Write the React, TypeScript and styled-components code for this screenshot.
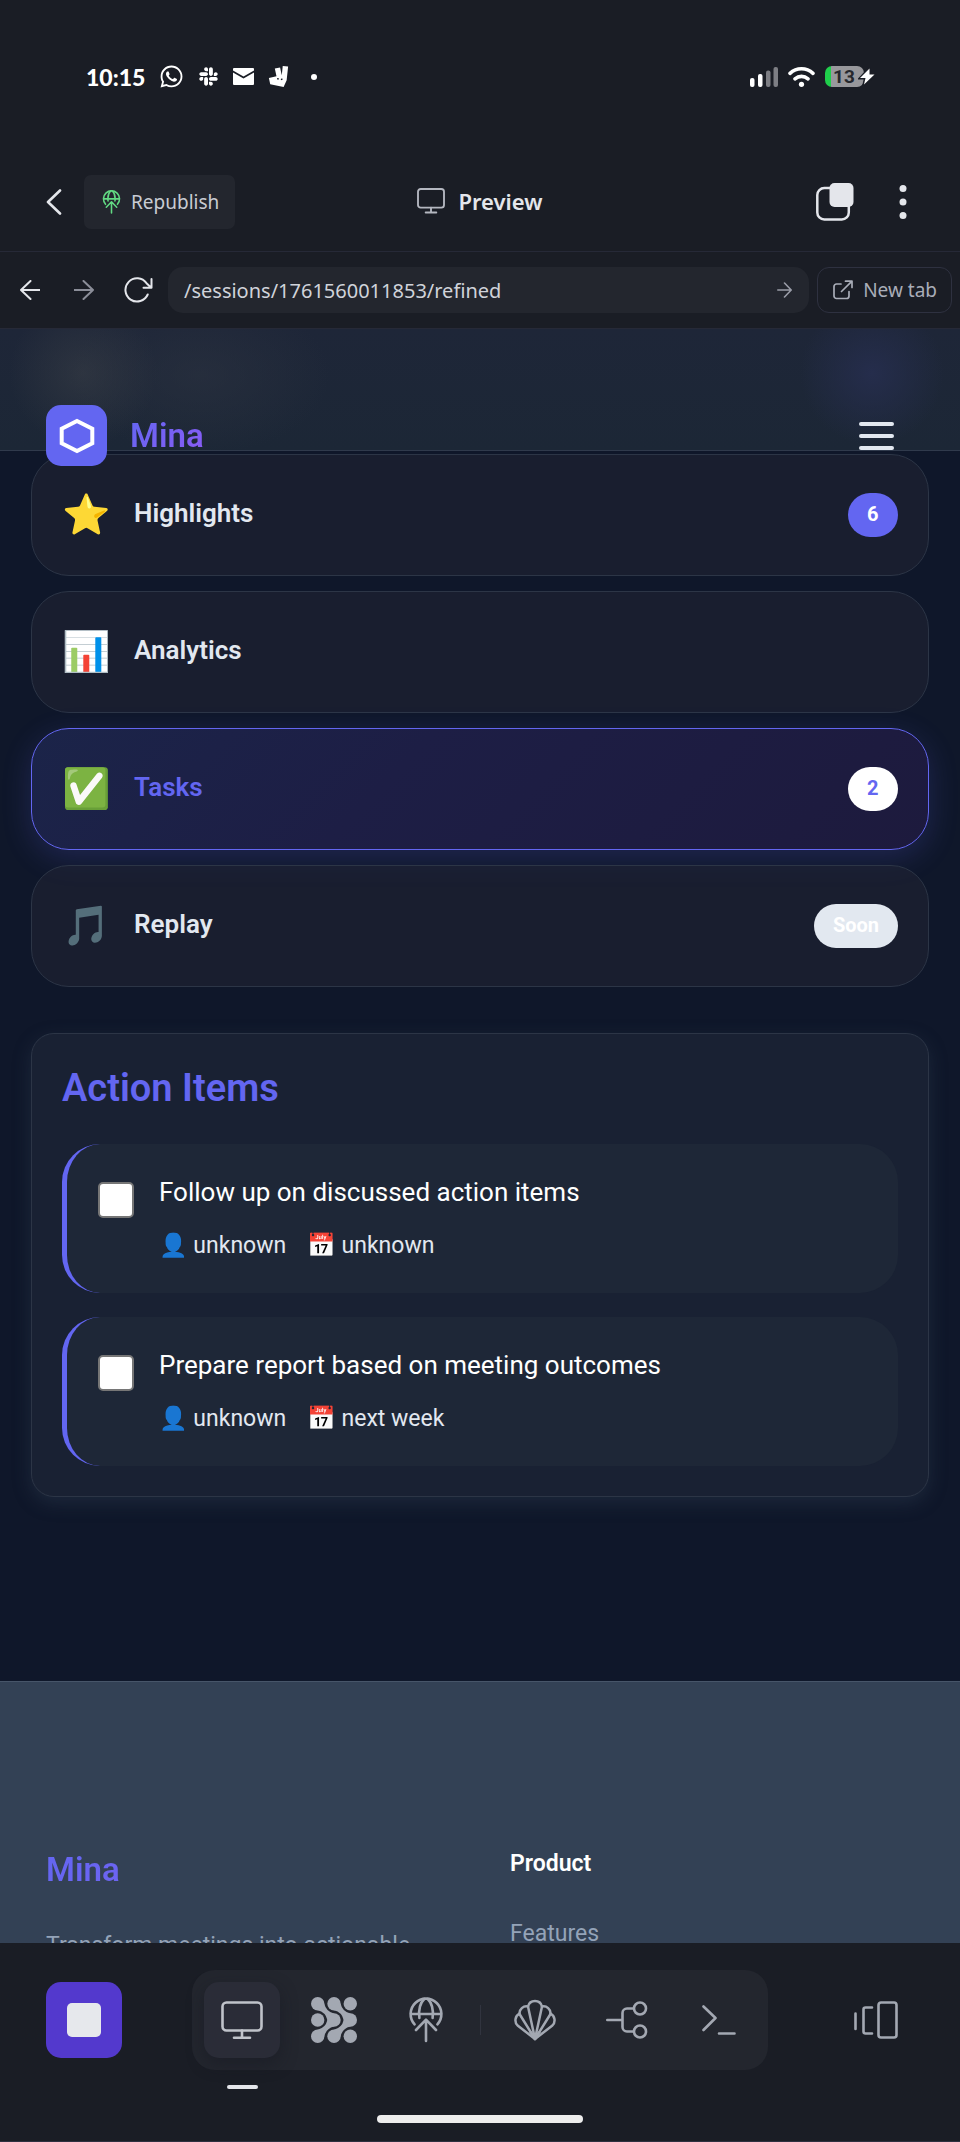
import React from "react";
import styled, { createGlobalStyle, css } from "styled-components";
import { FaWhatsapp, FaSlack } from "react-icons/fa";
import { SiDeliveroo } from "react-icons/si";

const GlobalStyle = createGlobalStyle`
  * { box-sizing: border-box; }
  body { margin: 0; background: #1a1d25; }
  button, input { font: inherit; color: inherit; margin: 0; }
  button { border: 0; padding: 0; background: none; cursor: pointer; }
  h1, h2, h3, p, ul { margin: 0; padding: 0; }
  a { color: inherit; text-decoration: none; }
  svg { display: block; flex: none; }
`;

const Shell = styled.div`
  height: 100vh;
  display: flex;
  flex-direction: column;
  overflow: hidden;
  background: #1a1d25;
  color: #e4e6eb;
  font-family: "Noto Sans", sans-serif;
  font-size: 19px;
`;

/* Device status */
const StatusBar = styled.div`
  flex: none;
  height: 153px;
  padding: 0 96px 0 86px;
  display: flex;
  align-items: center;
  justify-content: space-between;
  color: #fff;
`;
const StatusGroup = styled.div<{ $gap: number }>`
  display: flex;
  align-items: center;
  gap: ${(p) => p.$gap}px;
`;
const Clock = styled.time`
  font: 900 23px/28px Lato, sans-serif;
`;
const Dot = styled.span`
  width: 6px;
  height: 6px;
  margin-left: 8px;
  border-radius: 3px;
  background: #fff;
`;
const Battery = styled.div`
  position: relative;
  width: 39px;
  height: 21px;
  padding-right: 1px;
  border-radius: 7px;
  background: linear-gradient(90deg, #1fcf4b 6px, #98989c 6px);
  color: #26282e;
  font: 700 19px/21px Roboto, sans-serif;
  text-align: center;
`;
const Bolt = styled.svg`
  position: absolute;
  left: 33px;
  top: 1px;
`;

/* Workspace title bar */
const TitleBar = styled.header`
  flex: none;
  height: 99px;
  padding: 0 46px;
  display: grid;
  grid-template-columns: 1fr auto 1fr;
  align-items: center;
  border-bottom: 1px solid #262937;
`;
const TitleSide = styled.div<{ $end?: boolean }>`
  display: flex;
  align-items: center;
  gap: ${(p) => (p.$end ? 45 : 22)}px;
  padding-right: ${(p) => (p.$end ? 7 : 0)}px;
  justify-content: ${(p) => (p.$end ? "flex-end" : "flex-start")};
`;
const RepublishButton = styled.button`
  height: 54px;
  padding: 0 16px 0 18px;
  display: flex;
  align-items: center;
  gap: 10px;
  border-radius: 7px;
  background: #23262e;
  color: #c9ccd3;
`;
const PageTitle = styled.h1`
  display: flex;
  align-items: center;
  gap: 13px;
  padding-bottom: 2px;
  font-size: 22px;
  line-height: 30px;
  font-weight: 600;
  svg { color: #b4b7c0; }
`;

/* Address row */
const AddressRow = styled.div`
  flex: none;
  height: 77px;
  padding: 0 8px 0 3px;
  display: flex;
  align-items: center;
  border-bottom: 1px solid #262937;
`;
const NavButton = styled.button<{ $dim?: boolean }>`
  width: 54px;
  height: 46px;
  display: grid;
  place-items: center;
  color: ${(p) => (p.$dim ? "#8b8e99" : "#e4e6eb")};
`;
const AddressField = styled.form`
  flex: 1;
  min-width: 0;
  height: 46px;
  margin: 0 8px 0 3px;
  padding: 0 17px 0 16px;
  display: flex;
  align-items: center;
  border-radius: 15px;
  background: #23262e;
  color: #d0d3da;
  font-size: 20px;
`;
const AddressInput = styled.input`
  flex: 1;
  min-width: 0;
  border: 0;
  padding: 0;
  background: none;
  outline: none;
`;
const GoButton = styled.button`
  color: #9a9da8;
`;
const NewTabButton = styled.button`
  height: 46px;
  padding: 0 14px 0 15px;
  display: flex;
  align-items: center;
  gap: 10px;
  border: 1px solid #2e3140;
  border-radius: 12px;
  color: #a9adb8;
`;

/* Previewed site */
const Site = styled.div`
  flex: 1;
  min-height: 0;
  overflow: hidden;
  background: #0f172a;
  color: #e2e8f0;
  font-family: Roboto, "Noto Color Emoji", sans-serif;
`;
const SiteHeader = styled.header`
  position: relative;
  z-index: 1;
  height: 122px;
  padding: 76px 66px 0 46px;
  display: flex;
  align-items: flex-start;
  justify-content: space-between;
  border-bottom: 1px solid #303a4c;
  background:
    radial-gradient(circle at 83px 44px, rgba(58, 63, 71, 0.55), transparent 74px),
    radial-gradient(ellipse 130px 80px at 200px 46px, rgba(43, 50, 64, 0.6), transparent),
    radial-gradient(circle at calc(100% - 88px) 44px, #252d4c, rgba(37, 45, 76, 0) 72px),
    linear-gradient(#1e2638, #1c2736);
`;
const Brand = styled.a`
  display: flex;
  align-items: center;
  gap: 23px;
`;
const BrandMark = styled.span`
  width: 61px;
  height: 61px;
  display: grid;
  place-items: center;
  border-radius: 15px;
  background: #6366f1;
`;
const Wordmark = styled.span`
  font-size: 33px;
  line-height: 44px;
  font-weight: 600;
  color: transparent;
  background: linear-gradient(135deg, #6366f1, #8b5cf6);
  background-clip: text;
`;
const MenuButton = styled.button`
  height: 61px;
  display: flex;
  flex-direction: column;
  justify-content: center;
  gap: 8px;
`;
const MenuLine = styled.span`
  width: 35px;
  height: 4px;
  border-radius: 2px;
  background: #e2e8f0;
`;
const Content = styled.main`
  padding: 3px 31px 184px;
`;
const TabList = styled.nav`
  display: flex;
  flex-direction: column;
  gap: 15px;
`;
const TabCard = styled.button<{ $active?: boolean }>`
  height: 122px;
  padding: 0 30px;
  display: flex;
  align-items: center;
  border: 1px solid ${(p) => (p.$active ? "#6366f1" : "#2c3546")};
  border-radius: 38px;
  background: rgba(32, 35, 52, 0.6);
  text-align: left;
  ${(p) =>
    p.$active &&
    css`
      color: #6366f1;
      background: linear-gradient(135deg, #1b2449, #1d1e45 40%, #1d1a3d);
      box-shadow: 0 8px 30px rgba(99, 102, 241, 0.2);
    `}
`;
const TabIcon = styled.span`
  width: 72px;
  font-size: 39px;
  line-height: 44px;
`;
const TabLabel = styled.span`
  flex: 1;
  padding-bottom: 4px;
  font-size: 26px;
  line-height: 36px;
  font-weight: 600;
`;
const badgeTones = {
  accent: css`background: #6366f1; color: #fff;`,
  light: css`background: #fff; color: #6366f1;`,
  muted: css`background: #e2e8f0; color: #fff;`,
};
const Badge = styled.span<{ $tone: keyof typeof badgeTones }>`
  height: 44px;
  min-width: 50px;
  padding: 0 19px 2px;
  border-radius: 22px;
  font-size: 20px;
  line-height: 42px;
  font-weight: 700;
  ${(p) => badgeTones[p.$tone]}
`;
const Panel = styled.section`
  margin-top: 46px;
  padding: 31px 30px 30px;
  border: 1px solid #2c3546;
  border-radius: 23px;
  background: #192133;
  box-shadow: 0 6px 18px rgba(51, 65, 85, 0.4);
`;
const PanelTitle = styled.h2`
  margin-bottom: 33px;
  font-size: 38px;
  line-height: 46px;
  font-weight: 600;
  color: #6366f1;
`;
const TaskList = styled.ul`
  display: flex;
  flex-direction: column;
  gap: 24px;
  list-style: none;
`;
const TaskItem = styled.li`
  padding: 30px 31px;
  display: flex;
  gap: 25px;
  border-left: 5px solid #6366f1;
  border-radius: 38px;
  background: #1e2737;
`;
const TaskCheck = styled.input`
  appearance: none;
  flex: none;
  width: 36px;
  height: 36px;
  margin-top: 8px;
  border: 2px solid #767676;
  border-radius: 5px;
  background: #fff;
  &:checked { background: #6366f1; }
`;
const TaskText = styled.label`
  display: block;
  margin-bottom: 18px;
  font-size: 26px;
  line-height: 36px;
  color: #fff;
`;
const TaskMeta = styled.div`
  display: flex;
  gap: 21px;
  font-size: 23px;
  line-height: 35px;
`;
const SiteFooter = styled.footer`
  padding: 166px 46px 60px;
  display: grid;
  grid-template-columns: 1fr 1fr;
  gap: 60px;
  border-top: 1px solid #475569;
  background: #334155;
  font-size: 23px;
  line-height: 32px;
  color: #94a3b8;
`;
const FooterHeading = styled.h3`
  margin-bottom: 38px;
  font-size: 23px;
  line-height: 32px;
  font-weight: 600;
  color: #fff;
`;
const FooterBrand = styled(Wordmark)`
  display: block;
  margin-bottom: 38px;
`;

/* Bottom dock */
const Dock = styled.footer`
  position: relative;
  flex: none;
  height: 199px;
  padding: 27px 46px 0;
  display: flex;
  align-items: flex-start;
  justify-content: space-between;
  border-bottom: 1px solid #2e3140;
  background: #1a1d25;
  color: #a3a8b2;
`;
const DockGroup = styled.div`
  height: 100px;
  padding: 0 11px 0 12px;
  display: flex;
  align-items: center;
  gap: 16px;
  border-radius: 23px;
  background: #23262e;
`;
const DockButton = styled.button<{ $active?: boolean }>`
  position: relative;
  width: 76px;
  height: 76px;
  display: grid;
  place-items: center;
  border-radius: 15px;
  ${(p) =>
    p.$active &&
    css`
      background: #2a2c37;
      color: #c0c3ca;
      box-shadow: 0 6px 16px rgba(22, 24, 34, 0.5);
      &::after {
        content: "";
        position: absolute;
        left: 23px;
        top: 103px;
        width: 31px;
        height: 4px;
        border-radius: 2px;
        background: #e4e6eb;
      }
    `}
`;
const DockSide = styled.div`
  height: 100px;
  display: flex;
  align-items: center;
`;
const StopButton = styled(DockButton)`
  background: #5339cd;
`;
const StopSquare = styled.span`
  width: 34px;
  height: 34px;
  border-radius: 5px;
  background: #e6e8ec;
`;
const DockDivider = styled.span`
  width: 1px;
  height: 30px;
  background: #31343f;
`;
const HomeIndicator = styled.span`
  position: absolute;
  left: 50%;
  bottom: 18px;
  width: 206px;
  height: 8px;
  margin-left: -103px;
  border-radius: 4px;
  background: #ededed;
`;

/* Icons */
type IconProps = { w: number; h: number; box: string; sw?: number; children: React.ReactNode };
const Line = ({ w, h, box, sw = 2, children }: IconProps) => (
  <svg width={w} height={h} viewBox={box} fill="none" stroke="currentColor" strokeWidth={sw} strokeLinecap="round" strokeLinejoin="round" aria-hidden="true">
    {children}
  </svg>
);
const MonitorIcon = ({ w, h, sw }: { w: number; h: number; sw: number }) => (
  <Line w={w} h={h} box="0 0 42 39" sw={sw}>
    <rect x="1.5" y="1.5" width="39" height="28" rx="4" />
    <path d="M21 29.5V36.5M13 36.8H29" />
  </Line>
);
const PublishIcon = ({ w, h, color, sw }: { w: number; h: number; color?: string; sw: number }) => (
  <svg width={w} height={h} viewBox="0 0 34 46" fill="none" stroke={color ?? "currentColor"} strokeWidth={sw} strokeLinecap="round" strokeLinejoin="round" aria-hidden="true">
    <path d="M5.6 27.4A15.4 15.4 0 1 1 28.4 27.4M1.6 17H32.4" />
    <path d="M10.4 21C9.4 13.5 11.2 6 15.2 2M23.6 21C24.6 13.5 22.8 6 18.8 2" />
    <path d="M17 44V23M7 33L17 22.6L27 33" />
  </svg>
);
const neck = "M13.3 6.7A13 13 0 0 0 23 16.4V23H16.4A13 13 0 0 0 6.7 13.3V6.7Z";
const AgentIcon = () => (
  <svg width="46" height="46" viewBox="0 0 46 46" fill="currentColor" aria-hidden="true">
    {[6.7, 23, 39.3].map((y) => [6.7, 23, 39.3].map((x) => <circle key={`${x}-${y}`} cx={x} cy={y} r="6.7" />))}
    <path d={neck} />
    <path d={neck} transform="translate(16.3 0)" />
    <path d={neck} transform="matrix(1 0 0 -1 0 46)" />
    <path d={neck} transform="matrix(1 0 0 -1 16.3 46)" />
  </svg>
);
const ShellIcon = () => (
  <Line w={42} h={42} box="0 0 42 42" sw={2.5}>
    <path d="M21 40L14 7.5A7.2 7.2 0 0 1 28 7.5L21 40" />
    <path d="M21 40L5.5 15A7 7 0 0 1 14 7.5M21 40L36.5 15A7 7 0 0 0 28 7.5" />
    <path d="M21 40L3.6 26.5A7.5 7.5 0 0 1 5.5 14.6M21 40L38.4 26.5A7.5 7.5 0 0 0 36.5 14.6" />
    <path d="M16.5 33L21 38L25.5 33" />
  </Line>
);

const tabs: { icon: string; label: string; badge?: string; tone?: keyof typeof badgeTones; active?: boolean }[] = [
  { icon: "⭐", label: "Highlights", badge: "6", tone: "accent" },
  { icon: "📊", label: "Analytics" },
  { icon: "✅", label: "Tasks", badge: "2", tone: "light", active: true },
  { icon: "🎵", label: "Replay", badge: "Soon", tone: "muted" },
];
const tasks = [
  { id: "follow-up", text: "Follow up on discussed action items", owner: "unknown", due: "unknown" },
  { id: "report", text: "Prepare report based on meeting outcomes", owner: "unknown", due: "next week" },
];

export default function App() {
  return (
    <Shell>
      <GlobalStyle />
      <StatusBar>
        <StatusGroup $gap={14}>
          <Clock>10:15</Clock>
          <FaWhatsapp size={25} />
          <FaSlack size={21} />
          <svg width="21" height="17" viewBox="0 0 21 17" aria-hidden="true">
            <path fill="#fff" d="M0 1a1 1 0 0 1 1-1h19a1 1 0 0 1 1 1v1.5L10.5 8.5 0 2.5ZM0 4.5 10.5 10.5 21 4.5V16a1 1 0 0 1-1 1H1a1 1 0 0 1-1-1Z" />
          </svg>
          <SiDeliveroo size={21} />
          <Dot />
        </StatusGroup>
        <StatusGroup $gap={10}>
          <svg width="28" height="20" viewBox="0 0 28 20" aria-hidden="true">
            <rect x="0" y="11" width="4.5" height="9" rx="2" fill="#fff" />
            <rect x="8" y="7" width="4.5" height="13" rx="2" fill="#fff" />
            <rect x="16" y="3.5" width="4.5" height="16.5" rx="2" fill="#7d7e84" />
            <rect x="23.5" y="0" width="4.5" height="20" rx="2" fill="#7d7e84" />
          </svg>
          <svg width="27" height="20" viewBox="0 0 27 20" fill="none" stroke="#fff" strokeWidth="3.6" strokeLinecap="round" aria-hidden="true">
            <path d="M2 6.3C8.6 0.3 18.4 0.3 25 6.3M7 11.8C10.8 8.6 16.2 8.6 20 11.8" />
            <circle cx="13.5" cy="17.3" r="2.6" fill="#fff" stroke="none" />
          </svg>
          <Battery>
            13
            <Bolt width="19" height="19" viewBox="0 0 19 19" aria-hidden="true">
              <path d="M11 2L2.5 11H7.5L6 17.5L16.5 8H11.5Z" fill="none" stroke="#1a1d25" strokeWidth="3" />
              <path d="M11.5 1.5L2 11H7.5L6 17.5L16.5 7.5H11.5Z" fill="#fff" />
            </Bolt>
          </Battery>
        </StatusGroup>
      </StatusBar>

      <TitleBar>
        <TitleSide>
          <button aria-label="Back">
            <Line w={16} h={26} box="0 0 16 26" sw={2.6}><path d="M14 1.5L2 13L14 24.5" /></Line>
          </button>
          <RepublishButton>
            <PublishIcon w={19} h={24} color="#62d983" sw={3} />
            Republish
          </RepublishButton>
        </TitleSide>
        <PageTitle>
          <MonitorIcon w={28} h={26} sw={2.8} />
          Preview
        </PageTitle>
        <TitleSide $end>
          <button aria-label="Tabs">
            <svg width="38" height="38" viewBox="0 0 38 38" aria-hidden="true">
              <rect x="1.3" y="5" width="31.5" height="31.5" rx="7" fill="none" stroke="#e4e6eb" strokeWidth="2.5" />
              <rect x="13.5" y="0" width="24" height="24" rx="5" fill="#e4e6eb" />
            </svg>
          </button>
          <button aria-label="More">
            <svg width="8" height="34" viewBox="0 0 8 34" fill="#e4e6eb" aria-hidden="true">
              <circle cx="4" cy="3.5" r="3.5" /><circle cx="4" cy="17" r="3.5" /><circle cx="4" cy="30.5" r="3.5" />
            </svg>
          </button>
        </TitleSide>
      </TitleBar>

      <AddressRow>
        <NavButton aria-label="Go back">
          <Line w={20} h={20} box="0 0 20 20"><path d="M19.5 10H1M10.5 1L1 10L10.5 19" /></Line>
        </NavButton>
        <NavButton aria-label="Go forward" $dim>
          <Line w={20} h={20} box="0 0 20 20"><path d="M0.5 10H19M9.5 1L19 10L9.5 19" /></Line>
        </NavButton>
        <NavButton aria-label="Reload">
          <Line w={29} h={26} box="0 0 29 26"><path d="M23.7 17.5A11.6 11.6 0 1 1 22.5 6.2L27 10.5M27.5 2V10.8H19.5" /></Line>
        </NavButton>
        <AddressField onSubmit={(e) => e.preventDefault()}>
          <AddressInput aria-label="Address" defaultValue="/sessions/1761560011853/refined" />
          <GoButton aria-label="Go">
            <Line w={15} h={16} box="0 0 15 16" sw={1.6}><path d="M0.8 8H14M7.5 1L14.2 8L7.5 15" /></Line>
          </GoButton>
        </AddressField>
        <NewTabButton>
          <Line w={20} h={20} box="0 0 20 20" sw={1.7}><path d="M8 4H3.5A2.5 2.5 0 0 0 1 6.5V16A2.5 2.5 0 0 0 3.5 18.5H13.5A2.5 2.5 0 0 0 16 16V11.5M12.5 1.2H19V7.5M19 1.2L8.5 11.5" /></Line>
          New tab
        </NewTabButton>
      </AddressRow>

      <Site>
        <SiteHeader>
          <Brand href="#">
            <BrandMark>
              <svg width="36" height="36" viewBox="0 0 36 36" fill="none" stroke="#fff" strokeWidth="4" aria-hidden="true">
                <path d="M18 3L33.3 10.8V25.2L18 33L2.7 25.2V10.8Z" />
              </svg>
            </BrandMark>
            <Wordmark>Mina</Wordmark>
          </Brand>
          <MenuButton aria-label="Menu"><MenuLine /><MenuLine /><MenuLine /></MenuButton>
        </SiteHeader>
        <Content>
          <TabList>
            {tabs.map((t) => (
              <TabCard key={t.label} $active={t.active}>
                <TabIcon>{t.icon}</TabIcon>
                <TabLabel>{t.label}</TabLabel>
                {t.badge && t.tone && <Badge $tone={t.tone}>{t.badge}</Badge>}
              </TabCard>
            ))}
          </TabList>
          <Panel>
            <PanelTitle>Action Items</PanelTitle>
            <TaskList>
              {tasks.map((t) => (
                <TaskItem key={t.id}>
                  <TaskCheck type="checkbox" id={t.id} />
                  <div>
                    <TaskText htmlFor={t.id}>{t.text}</TaskText>
                    <TaskMeta>
                      <span>👤 {t.owner}</span>
                      <span>📅 {t.due}</span>
                    </TaskMeta>
                  </div>
                </TaskItem>
              ))}
            </TaskList>
          </Panel>
        </Content>
        <SiteFooter>
          <div>
            <FooterBrand>Mina</FooterBrand>
            <p>Transform meetings into actionable</p>
          </div>
          <div>
            <FooterHeading>Product</FooterHeading>
            <a href="#">Features</a>
          </div>
        </SiteFooter>
      </Site>

      <Dock>
        <DockSide>
          <StopButton aria-label="Stop"><StopSquare /></StopButton>
        </DockSide>
        <DockGroup>
          <DockButton aria-label="Preview" $active><MonitorIcon w={42} h={39} sw={2.6} /></DockButton>
          <DockButton aria-label="Agent"><AgentIcon /></DockButton>
          <DockButton aria-label="Publish"><PublishIcon w={34} h={46} sw={2.6} /></DockButton>
          <DockDivider />
          <DockButton aria-label="Shell"><ShellIcon /></DockButton>
          <DockButton aria-label="Git">
            <Line w={42} h={38} box="0 0 42 38" sw={2.6}>
              <path d="M1.3 19H16.5M27.5 7.5H21A4.5 4.5 0 0 0 16.5 12V26A4.5 4.5 0 0 0 21 30.5H27.5" />
              <circle cx="34" cy="7.5" r="6" /><circle cx="34" cy="30.5" r="6" />
            </Line>
          </DockButton>
          <DockButton aria-label="Console">
            <Line w={34} h={30} box="0 0 34 30" sw={2.6}><path d="M1.5 1.5L13.5 13L1.5 25M17 28.5H32.5" /></Line>
          </DockButton>
        </DockGroup>
        <DockSide>
          <DockButton aria-label="Layout">
            <Line w={44} h={38} box="0 0 44 38" sw={2.6}>
              <path d="M1.5 12.5V28M18 6.5H11.5A2 2 0 0 0 9.5 8.5V30.5A2 2 0 0 0 11.5 32.5H18" />
              <rect x="24.5" y="1.5" width="18" height="35" rx="2.5" />
            </Line>
          </DockButton>
        </DockSide>
        <HomeIndicator />
      </Dock>
    </Shell>
  );
}
